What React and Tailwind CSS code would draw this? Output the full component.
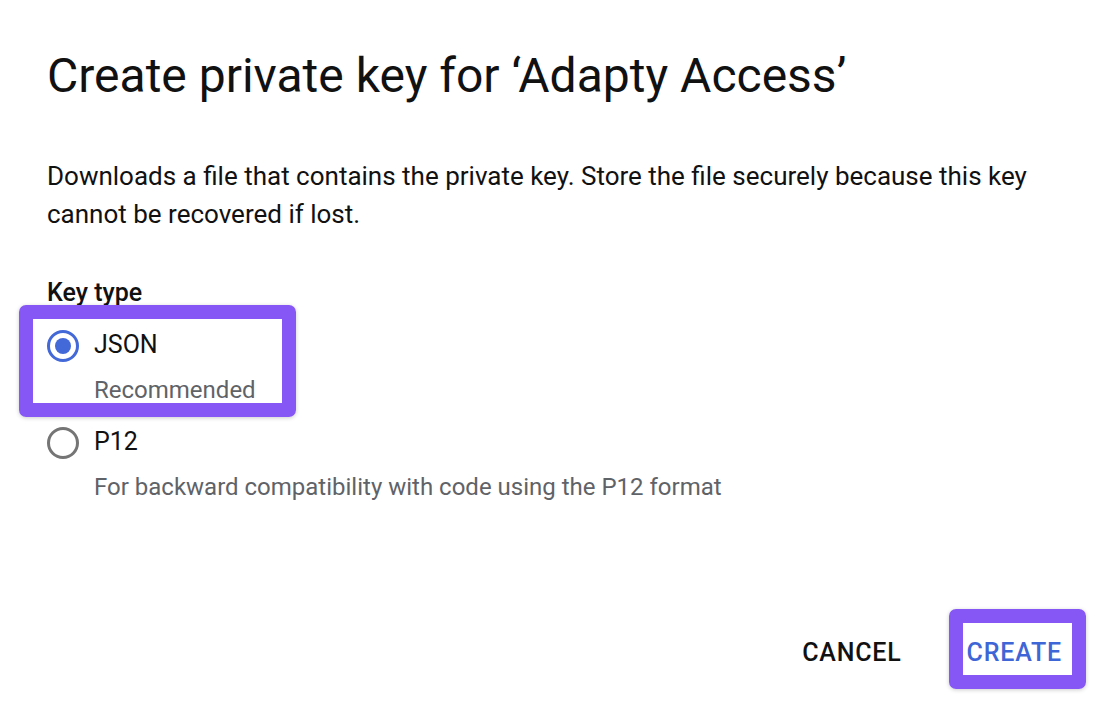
import React from "react";

function Radio({ checked }) {
  if (checked) {
    return (
      <span className="flex h-[32px] w-[32px] shrink-0 items-center justify-center rounded-full border-[3.5px] border-[#4368d8] mt-[3px]">
        <span className="h-[16px] w-[16px] rounded-full bg-[#4368d8]" />
      </span>
    );
  }
  return (
    <span className="h-[32px] w-[32px] shrink-0 rounded-full border-[3.5px] border-[#757575] mt-[3px]" />
  );
}

export default function App() {
  return (
    <div
      className="relative h-[706px] w-[1106px] overflow-hidden bg-white text-[#111111]"
      style={{ fontFamily: "Roboto, 'Noto Sans', sans-serif" }}
    >
      <div className="pl-[47px]">
        <h1 className="pt-[48px] text-[48px] leading-[56px] font-normal">
          Create private key for ‘Adapty Access’
        </h1>
        <p className="mt-[53px] w-[1010px] text-[26px] leading-[38px]">
          Downloads a file that contains the private key. Store the file securely because this key cannot be recovered if lost.
        </p>
        <div className="mt-[44px] text-[25px] leading-[32px] font-medium">Key type</div>

        <div className="mt-[18px] flex items-center gap-[15px] text-[25px] leading-[32px]">
          <Radio checked />
          <span>JSON</span>
        </div>
        <div className="mt-[12px] pl-[47px] text-[24px] leading-[32px] text-[#5f6368]">Recommended</div>

        <div className="mt-[18px] flex items-center gap-[15px] text-[25px] leading-[32px]">
          <Radio />
          <span>P12</span>
        </div>
        <div className="mt-[12px] pl-[47px] text-[24px] leading-[32px] text-[#5f6368]">
          For backward compatibility with code using the P12 format
        </div>
      </div>

      <div className="mt-[134px] flex justify-end gap-[65px] pr-[44px] text-[25px] leading-[32px] font-medium tracking-[0.8px]">
        <button className="text-[#111111] uppercase">CANCEL</button>
        <button className="text-[#3f66d6] uppercase">CREATE</button>
      </div>

      <div className="pointer-events-none absolute left-[19px] top-[305px] h-[112px] w-[277px] rounded-[7px] border-[14px] border-[#8657f5] shadow-[0_1px_4px_rgba(0,0,0,0.2)]" />
      <div className="pointer-events-none absolute left-[949px] top-[609px] h-[80px] w-[137px] rounded-[7px] border-[14px] border-[#8657f5] shadow-[0_1px_4px_rgba(0,0,0,0.2)]" />
    </div>
  );
}
